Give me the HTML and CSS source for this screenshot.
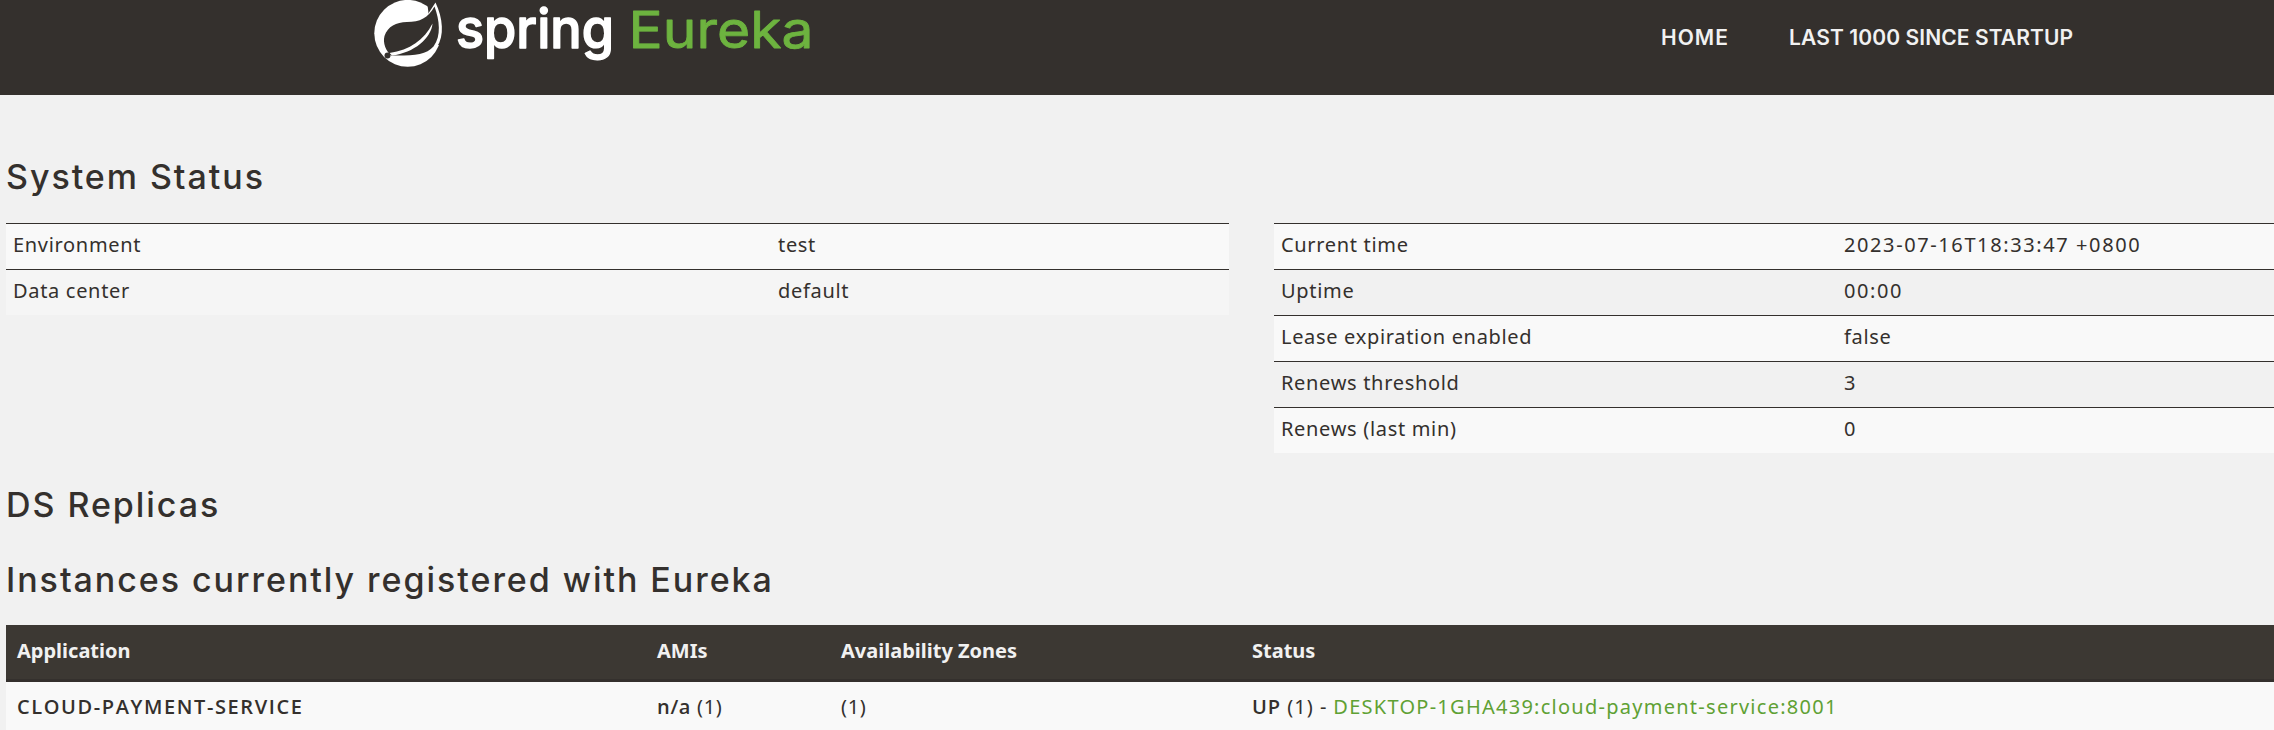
FILE: index.html
```
<!DOCTYPE html>
<html lang="en">
<head>
<meta charset="utf-8">
<title>Eureka</title>
<link rel="stylesheet" href="styles.css">
</head>
<body>
<header class="navbar">
  <a class="brand">
    <svg class="logo" width="450" height="72" viewBox="0 0 450 72" role="img" aria-label="Spring Eureka">
      <circle class="white" cx="37.7" cy="33.3" r="33.4"/>
      <path class="dark" d="M57 0H80V45H62Z"/>
      <path class="white" d="M65.500 2.500C73 18 74.500 36 67 47C61 56 50 58 38 57L50 22L58 14Z"/>
      <path class="dark" d="M64.500 6.500C69.500 20 71.500 36 63.500 46.500C56 55 43 55.800 21 55.500C16 51 12.500 43 14.500 36C18 26 26 22.500 37 22C50 22 58 18 64.500 6.500Z"/>
      <path class="white" d="M62.500 23.500C61.500 38 44 53 22 55.500L19.500 53C40 50 54 40 62.500 23.500Z"/>
      <circle class="dark" cx="17.500" cy="55.500" r="3"/>
      <text class="wordmark" x="86" y="47.500" textLength="158" lengthAdjust="spacingAndGlyphs">spring</text>
      <text class="product" x="258.500" y="48" textLength="185" lengthAdjust="spacingAndGlyphs">Eureka</text>
    </svg>
  </a>
  <nav class="nav"><a class="home">HOME</a><a class="last">LAST 1000 SINCE STARTUP</a></nav>
</header>
<main class="content">
  <h1 class="title">System Status</h1>
  <div class="status">
    <table class="info general">
      <tr><td>Environment</td><td>test</td></tr>
      <tr class="hover"><td>Data center</td><td>default</td></tr>
    </table>
    <table class="info runtime">
      <tr><td>Current time</td><td class="num">2023-07-16T18:33:47 +0800</td></tr>
      <tr><td>Uptime</td><td class="num">00:00</td></tr>
      <tr><td>Lease expiration enabled</td><td>false</td></tr>
      <tr><td>Renews threshold</td><td class="num">3</td></tr>
      <tr><td>Renews (last min)</td><td class="num">0</td></tr>
    </table>
  </div>
  <h1 class="title replicas">DS Replicas</h1>
  <h1 class="title registered">Instances currently registered with Eureka</h1>
  <table class="instances">
    <thead><tr><th class="c-app">Application</th><th class="c-ami">AMIs</th><th class="c-zone">Availability Zones</th><th>Status</th></tr></thead>
    <tbody><tr><td><b class="app">CLOUD-PAYMENT-SERVICE</b></td><td><b>n/a</b> (1)</td><td>(1)</td><td><span class="state"><b>UP</b> (1) -</span> <a class="link">DESKTOP-1GHA439:cloud-payment-service:8001</a></td></tr></tbody>
  </table>
</main>
</body>
</html>
```
FILE: styles.css
```
* { box-sizing: border-box; }
body {
  margin: 0;
  height: 730px;
  overflow: hidden;
  background: #f1f1f1;
  color: #34302d;
  font: 20px/28px "Noto Sans", "Open Sans", sans-serif;
  letter-spacing: .68px;
}
.navbar {
  display: flex;
  justify-content: space-between;
  height: 95px;
  padding: 0 195px 0 370px;
  background: #34302d;
}
.brand, .logo { display: block; }
.logo { overflow: visible; }
.white { fill: #fff; }
.dark { fill: #34302d; }
.wordmark, .product {
  font-family: Inter, sans-serif;
  letter-spacing: 0;
  stroke-linejoin: round;
}
.wordmark { font-size: 54px; font-weight: 500; fill: #fff; stroke: #fff; stroke-width: 1.5px; }
.product { font-size: 51px; font-weight: 400; fill: #6db33f; stroke: #6db33f; stroke-width: .8px; }
.nav {
  display: flex;
  gap: 60px;
  padding-top: 24px;
  color: #f1f1f1;
  font: 600 21px/28px Inter, sans-serif;
}
.home { width: 68px; margin-left: -1px; letter-spacing: 1px; }
.last { width: 290px; letter-spacing: .1px; white-space: nowrap; }
.content { padding: 61px 0 0 6px; }
.title {
  margin: 0;
  height: 67px;
  font: 500 34px/42px Inter, sans-serif;
  letter-spacing: 1.95px;
}
.status {
  display: flex;
  gap: 45px;
  height: 261px;
}
.info, .instances { border-collapse: separate; border-spacing: 0; table-layout: fixed; }
.info { align-self: flex-start; }
.general { width: 1223px; }
.runtime { width: 1000px; }
.info tr { background: #f1f1f1; }
.info tr:nth-child(odd) { background: #f9f9f9; }
.info .hover { background: #f5f5f5; }
.info td {
  height: 46px;
  padding: 7px 7px 10px;
  border-top: 1px solid #34302d;
  vertical-align: top;
}
.info td + td { padding-left: 8px; }
.general td:first-child { width: 764px; }
.runtime td:first-child { width: 562px; }
.info .num { letter-spacing: 1.6px; }
.replicas { height: 75px; }
.registered { height: 66px; }
.instances { width: 2268px; }
.instances th {
  height: 57px;
  padding: 12px 11px 14px;
  border-bottom: 3px solid #34302d;
  background: #3c3833;
  color: #f1f1f1;
  text-align: left;
  vertical-align: top;
  font-weight: 700;
  letter-spacing: 0;
}
.c-app { width: 640px; }
.c-ami { width: 184px; }
.c-zone { width: 411px; }
.instances td {
  height: 52px;
  padding: 11px 11px 13px;
  background: #f9f9f9;
  vertical-align: top;
}
.instances b { font-family: "Open Sans", sans-serif; font-weight: 600; }
.instances .app { letter-spacing: 1.6px; }
.state { letter-spacing: 1px; }
.link { color: #5fa134; letter-spacing: 1.26px; }
```
